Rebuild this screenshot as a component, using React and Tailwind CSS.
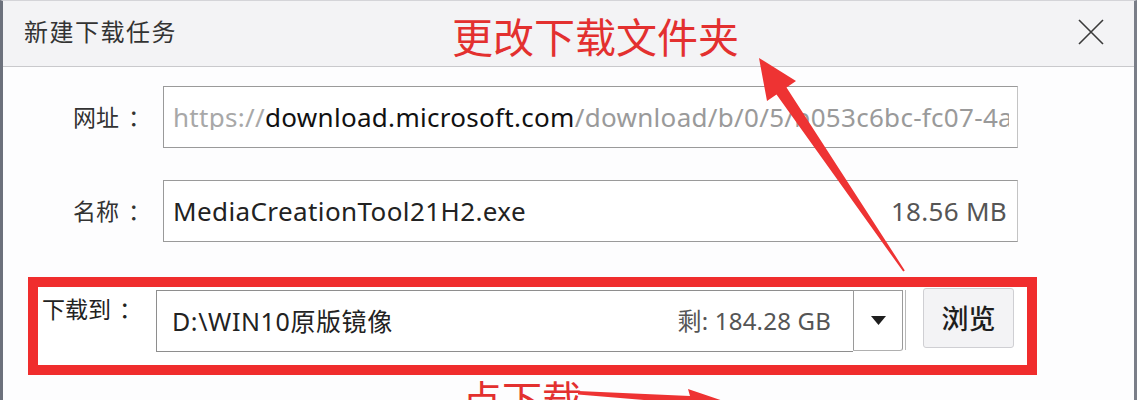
import React from "react";

const font = { fontFamily: '"Noto Sans", "Noto Sans CJK SC", sans-serif' };

function Colon({ shift = "translate-x-[9px]" }) {
  return <span className={"inline-block " + shift}>：</span>;
}

export default function App() {
  return (
    <div
      className="relative w-[1137px] h-[400px] overflow-hidden bg-[#fdfdfe]"
      style={font}
    >
      <div className="box-border w-[1137px] h-[400px] border-l-[3px] border-r-[3px] border-t border-l-[#6c717c] border-r-[#7a7e88] border-t-[#d4d4d8] flex flex-col">
        {/* Title bar */}
        <div className="h-[66px] shrink-0 bg-[#f3f3f5] border-b border-[#c9c9cc] flex items-center justify-between pl-[21px] pr-[29px] pb-[4px]">
          <span className="text-[24px] leading-none text-[#333] tracking-[1.5px]">新建下载任务</span>
          <svg width="28" height="28" viewBox="0 0 28 28">
            <path d="M2 2 L26 26 M26 2 L2 26" stroke="#3a3a3a" strokeWidth="1.6" fill="none" />
          </svg>
        </div>

        {/* URL row */}
        <div className="flex items-center pl-[70px] mt-[19px]">
          <span className="w-[90px] text-[23px] leading-none text-[#333] whitespace-nowrap">
            网址<Colon />
          </span>
          <div className="w-[855px] h-[62px] border border-[#9a9a9a] border-r-[#c4c4c4] bg-white flex items-center pl-[9px] pr-[8px]">
            <span className="overflow-hidden whitespace-nowrap text-[26px] leading-none tracking-[0.3px]">
              <span className="text-[#a8a8a8]">https://</span>
              <span className="text-[#111]">download.microsoft.com</span>
              <span className="text-[#9a9a9a]">/download/b/0/5/b053c6bc-fc07-4a4e-a5f2-1fb9d8d10d8c/MediaCreationTool21H2.exe</span>
            </span>
          </div>
        </div>

        {/* Name row */}
        <div className="flex items-center pl-[70px] mt-[32px]">
          <span className="w-[90px] text-[23px] leading-none text-[#333] whitespace-nowrap">
            名称<Colon />
          </span>
          <div className="w-[855px] h-[62px] border border-[#9a9a9a] border-r-[#c4c4c4] bg-white flex items-center justify-between pl-[9px] pr-[10px]">
            <span className="text-[26px] leading-none text-[#222] tracking-[0.4px]">MediaCreationTool21H2.exe</span>
            <span className="text-[26px] leading-none text-[#555] tracking-[0.3px]">18.56 MB</span>
          </div>
        </div>

        {/* Download-to row highlighted */}
        <div className="ml-[25px] mt-[35px] w-[1009px] h-[98px] shrink-0 border-[10px] border-[#f02d2d] bg-white flex items-start">
          <span className="w-[118px] pl-[4px] mt-[11px] text-[23px] leading-none text-[#222] whitespace-nowrap">
            下载到<Colon shift="translate-x-[8px]" />
          </span>
          <div className="mt-[3px] flex h-[62px]">
            <div className="w-[697px] h-[62px] border-l border-t border-b border-[#8e8e8e] bg-white flex items-center justify-between pl-[15px] pr-[22px]">
              <span className="text-[25px] leading-none text-[#222] tracking-[0.6px]">D:\WIN10原版镜像</span>
              <span className="text-[24px] leading-none text-[#555] tracking-[0.2px]">剩: 184.28 GB</span>
            </div>
            <div className="w-[50px] h-[61px] border border-[#9a9a9a] border-b-[#b0b0b0] rounded-br-[3px] bg-white flex items-center justify-center">
              <svg width="15" height="9" viewBox="0 0 15 9">
                <path d="M0 0 H15 L7.5 9 Z" fill="#1e1e1e" />
              </svg>
            </div>
            <div className="ml-[2px] w-px h-[60px] bg-[#b8b8b8]" />
          </div>
          <button className="ml-[17px] mt-[1px] w-[91px] h-[60px] rounded-[3px] border border-[#cfcfd3] bg-[#f3f3f5] flex items-center justify-center text-[27px] leading-none font-medium text-[#1e1e1e]">
            浏览
          </button>
        </div>
      </div>

      {/* Annotations */}
      <span className="absolute left-[452px] top-[17px] text-[41px] leading-none text-[#e3302f] whitespace-nowrap">
        更改下载文件夹
      </span>
      <span className="absolute left-[462px] top-[380px] text-[40px] leading-none text-[#e3302f] whitespace-nowrap">
        点下载
      </span>
      <svg className="absolute left-0 top-0 pointer-events-none" width="1137" height="400" viewBox="0 0 1137 400">
        <polygon
          points="759,58 796,81 786.5,87.6 904.8,270.4 903.2,271.6 776.5,94.4 767,101"
          fill="#ee3333"
        />
        <polygon
          points="578,391 690,396 688,389 750,410 690,426 692,404 578,394.5"
          fill="#ee3333"
        />
      </svg>
    </div>
  );
}
